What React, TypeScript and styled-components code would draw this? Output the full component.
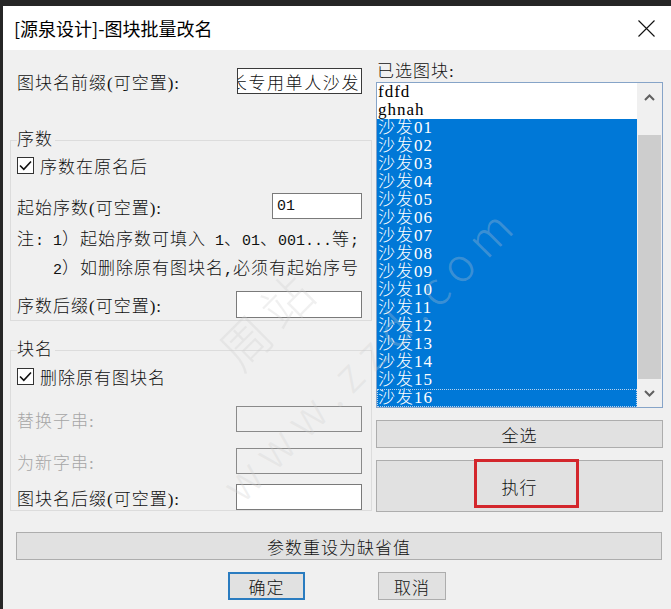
import styled, { createGlobalStyle } from 'styled-components';

const GlobalStyle = createGlobalStyle`
  html, body {
    margin: 0;
    padding: 0;
    background: #262626;
  }
  body {
    font-family: "Liberation Serif", "Noto Sans CJK SC", serif;
  }
  * {
    box-sizing: border-box;
  }
`;

const Screen = styled.div`
  position: relative;
  width: 671px;
  height: 609px;
  padding: 6px 0 0 3px;
  background: #262626;
  overflow: hidden;
`;

const Dialog = styled.div`
  width: 668px;
  height: 603px;
  background: #f0f0f0;
  display: flex;
  flex-direction: column;
  color: #111;
  font-size: 17px;
  font-weight: 300;
  letter-spacing: 1px;
`;

const TitleBar = styled.div`
  height: 44px;
  flex-shrink: 0;
  background: #fff;
  display: flex;
  align-items: center;
  justify-content: space-between;
  padding: 0 16px 0 11px;
`;

const Title = styled.span`
  font-family: "Noto Sans CJK SC", sans-serif;
  font-size: 18px;
  font-weight: 400;
  letter-spacing: 0;
  color: #000;
`;

const Body = styled.div`
  display: grid;
  grid-template-columns: 362px 287px;
  column-gap: 4px;
  padding: 13px 0 0 7px;
`;

const LeftCol = styled.div`
  display: flex;
  flex-direction: column;
  padding-top: 5px;
`;

const RightCol = styled.div`
  display: flex;
  flex-direction: column;
`;

const FieldRow = styled.div<{ $mt?: number; $pad?: string }>`
  display: flex;
  align-items: center;
  justify-content: space-between;
  margin-top: ${(p) => p.$mt ?? 0}px;
  padding: ${(p) => p.$pad ?? '0'};
`;

const Label = styled.span<{ $disabled?: boolean }>`
  color: ${(p) => (p.$disabled ? '#a6a6a6' : '#111')};
  white-space: nowrap;
`;

const TextBox = styled.div<{ $w: number; $h?: number; $disabled?: boolean; $dark?: boolean }>`
  width: ${(p) => p.$w}px;
  height: ${(p) => p.$h ?? 26}px;
  background: ${(p) => (p.$disabled ? '#f0f0f0' : '#fff')};
  border: 1px solid ${(p) => (p.$dark ? '#3a3a3a' : p.$disabled ? '#8a8a8a' : '#7a7a7a')};
  display: flex;
  align-items: center;
  padding: 0 1px 0 4px;
  overflow: hidden;
  white-space: nowrap;
  flex-shrink: 0;
`;

/* value scrolled to its end, so the start is clipped on the left */
const ScrolledBox = styled(TextBox)`
  justify-content: flex-end;
  padding: 0 1px 0 0;
  letter-spacing: 1.6px;
`;

const Group = styled.fieldset<{ $mt: number; $pb?: number }>`
  margin: ${(p) => p.$mt}px 0 0 0;
  border: 1px solid #dcdcdc;
  padding: 0 9px ${(p) => p.$pb ?? 0}px 6px;
  min-width: 0;
`;

const Legend = styled.legend`
  padding: 0 2px 0 0;
  line-height: 22px;
  height: 22px;
`;

const CheckRow = styled.label<{ $mt: number }>`
  display: flex;
  align-items: center;
  gap: 6px;
  height: 20px;
  margin-top: ${(p) => p.$mt}px;
`;

const CheckBox = styled.span`
  width: 17px;
  height: 17px;
  border: 1px solid #333;
  background: #fff;
  display: flex;
  align-items: center;
  justify-content: center;
`;

const Note = styled.div<{ $mt: number; $indent?: number }>`
  height: 22px;
  line-height: 22px;
  margin-top: ${(p) => p.$mt}px;
  padding-left: ${(p) => p.$indent ?? 0}px;
  white-space: nowrap;
`;

/* half-width latin run, 9px per character like the dialog font */
const Half = styled.span`
  font-family: "Liberation Mono", monospace;
  font-size: 15px;
  letter-spacing: 0;
  white-space: pre;
`;

const ListCaption = styled.div`
  height: 19px;
  line-height: 18px;
  padding-left: 1px;
`;

const ListBox = styled.div`
  height: 326px;
  border: 1px solid #86a4c8;
  background: #fff;
  display: flex;
`;

const Items = styled.div`
  flex: 1;
  display: flex;
  flex-direction: column;
  overflow: hidden;
`;

const Item = styled.div<{ $selected?: boolean; $focus?: boolean }>`
  height: 18px;
  line-height: 18px;
  padding-left: 1px;
  white-space: nowrap;
  color: ${(p) => (p.$selected ? '#fff' : '#000')};
  background: ${(p) => (p.$selected ? '#0078d7' : 'transparent')};
  outline: ${(p) => (p.$focus ? '1px dotted #b9d3ee' : 'none')};
  outline-offset: -1px;
`;

const ScrollBar = styled.div`
  width: 25px;
  background: #f0f0f0;
  display: flex;
  flex-direction: column;
`;

const ScrollArrow = styled.div`
  height: 28px;
  display: flex;
  align-items: center;
  justify-content: center;
`;

const Track = styled.div`
  flex: 1;
  padding: 24px 1px 0;
  display: flex;
`;

const Thumb = styled.div`
  flex: 1;
  background: #cdcdcd;
`;

const Button = styled.div<{ $h?: number; $mt?: number; $w?: number; $default?: boolean }>`
  position: relative;
  height: ${(p) => p.$h ?? 28}px;
  width: ${(p) => (p.$w ? `${p.$w}px` : 'auto')};
  margin-top: ${(p) => p.$mt ?? 0}px;
  background: #e1e1e1;
  border: ${(p) => (p.$default ? '2px solid #2a7cc0' : '1px solid #adadad')};
  display: flex;
  align-items: center;
  justify-content: center;
  color: #111;
`;

const Highlight = styled.div`
  position: absolute;
  left: 97px;
  top: -2px;
  width: 105px;
  height: 49px;
  border: 3px solid #d3262c;
  pointer-events: none;
`;

const Footer = styled.div`
  display: flex;
  flex-direction: column;
  padding: 20px 0 0 13px;
`;

const WideButton = styled(Button)`
  width: 646px;
`;

const ButtonRow = styled.div`
  display: flex;
  justify-content: center;
  gap: 73px;
  margin-top: 12px;
  padding-right: 13px;
`;

const Watermark = styled.div<{ $x: number; $y: number; $size: number; $spacing: number }>`
  position: absolute;
  left: ${(p) => p.$x}px;
  top: ${(p) => p.$y}px;
  transform-origin: 0 50%;
  transform: rotate(-45deg);
  font-family: "Noto Sans CJK SC", "Liberation Sans", sans-serif;
  font-weight: 300;
  font-size: ${(p) => p.$size}px;
  letter-spacing: ${(p) => p.$spacing}px;
  color: rgba(205, 205, 205, 0.3);
  white-space: nowrap;
  pointer-events: none;
`;

function Check() {
  return (
    <svg width="13" height="11" viewBox="0 0 13 11">
      <path d="M1 5.5 L4.8 9.3 L12 1.5" fill="none" stroke="#111" strokeWidth="1.6" />
    </svg>
  );
}

function Chevron({ up }: { up?: boolean }) {
  return (
    <svg width="11" height="7" viewBox="0 0 11 7">
      <path
        d={up ? 'M1 6 L5.5 1.5 L10 6' : 'M1 1 L5.5 5.5 L10 1'}
        fill="none"
        stroke="#606060"
        strokeWidth="2"
      />
    </svg>
  );
}

const blocks = ['fdfd', 'ghnah', ...Array.from({ length: 16 }, (_, i) => `沙发${String(i + 1).padStart(2, '0')}`)];

export default function App() {
  return (
    <Screen>
      <GlobalStyle />
      <Dialog>
        <TitleBar>
          <Title>[源泉设计]-图块批量改名</Title>
          <svg width="17" height="17" viewBox="0 0 17 17">
            <path d="M0.5 0.5 L16.5 16.5 M16.5 0.5 L0.5 16.5" stroke="#111" strokeWidth="1.1" />
          </svg>
        </TitleBar>
        <Body>
          <LeftCol>
            <FieldRow $pad="0 10px 0 7px">
              <Label>图块名前缀(可空置):</Label>
              <ScrolledBox $w={125} $dark>
                董事长专用单人沙发
              </ScrolledBox>
            </FieldRow>

            <Group $mt={35} $pb={2}>
              <Legend>序数</Legend>
              <CheckRow $mt={4}>
                <CheckBox>
                  <Check />
                </CheckBox>
                序数在原名后
              </CheckRow>
              <FieldRow $mt={18}>
                <Label>起始序数(可空置):</Label>
                <TextBox $w={90}>
                  <Half>01</Half>
                </TextBox>
              </FieldRow>
              <Note $mt={10}>
                注<Half>: 1</Half>）起始序数可填入<Half> 1</Half>、<Half>01</Half>、<Half>001...</Half>等
                <Half>;</Half>
              </Note>
              <Note $mt={7} $indent={36}>
                <Half>2</Half>）如删除原有图块名<Half>,</Half>必须有起始序号
              </Note>
              <FieldRow $mt={11}>
                <Label>序数后缀(可空置):</Label>
                <TextBox $w={126} $h={27} />
              </FieldRow>
            </Group>

            <Group $mt={18}>
              <Legend>块名</Legend>
              <CheckRow $mt={5}>
                <CheckBox>
                  <Check />
                </CheckBox>
                删除原有图块名
              </CheckRow>
              <FieldRow $mt={20}>
                <Label $disabled>替换子串:</Label>
                <TextBox $w={126} $disabled />
              </FieldRow>
              <FieldRow $mt={16}>
                <Label $disabled>为新字串:</Label>
                <TextBox $w={126} $disabled />
              </FieldRow>
              <FieldRow $mt={10}>
                <Label>图块名后缀(可空置):</Label>
                <TextBox $w={126} />
              </FieldRow>
            </Group>
          </LeftCol>

          <RightCol>
            <ListCaption>已选图块:</ListCaption>
            <ListBox>
              <Items>
                {blocks.map((name, i) => (
                  <Item key={name} $selected={i >= 2} $focus={i === blocks.length - 1}>
                    {name}
                  </Item>
                ))}
              </Items>
              <ScrollBar>
                <ScrollArrow>
                  <Chevron up />
                </ScrollArrow>
                <Track>
                  <Thumb />
                </Track>
                <ScrollArrow>
                  <Chevron />
                </ScrollArrow>
              </ScrollBar>
            </ListBox>
            <Button $mt={12}>全选</Button>
            <Button $mt={12} $h={52}>
              执行
              <Highlight />
            </Button>
          </RightCol>
        </Body>

        <Footer>
          <WideButton>参数重设为缺省值</WideButton>
          <ButtonRow>
            <Button $w={77} $default>
              确定
            </Button>
            <Button $w={68}>取消</Button>
          </ButtonRow>
        </Footer>
      </Dialog>
      <Watermark $x={226} $y={322} $size={50} $spacing={8}>
        周站
      </Watermark>
      <Watermark $x={228} $y={458} $size={46} $spacing={10}>
        www.zzd.com
      </Watermark>
    </Screen>
  );
}
